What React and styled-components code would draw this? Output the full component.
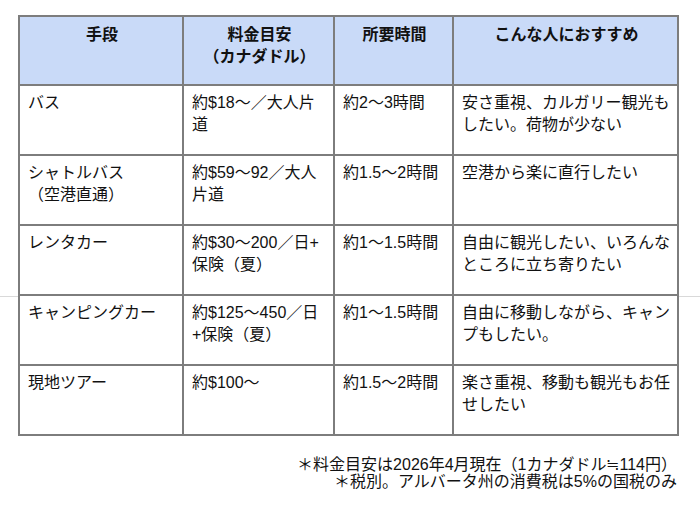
import styled, { createGlobalStyle } from "styled-components";

const GlobalStyle = createGlobalStyle`
  html, body {
    margin: 0;
    padding: 0;
    background: #ffffff;
  }
  body {
    font-family: "Liberation Sans", "Noto Sans CJK JP", sans-serif;
    color: #111111;
  }
`;

const Page = styled.div`
  position: relative;
  width: 700px;
  height: 507px;
  padding: 15px 0 0 18px;
  box-sizing: border-box;
  overflow: hidden;
`;

// faint page-break rule that runs across the whole sheet
const PageRule = styled.div`
  position: absolute;
  left: 0;
  right: 0;
  top: 296px;
  height: 1px;
  background: #d9d9d9;
`;

const Table = styled.table`
  position: relative;
  table-layout: fixed;
  border-collapse: separate;
  border-spacing: 0;
  width: 661px;
  border-top: 2px solid #7d7d7d;
  border-left: 2px solid #7d7d7d;
  font-size: 16px;
  line-height: 22px;
`;

const HeadCell = styled.th`
  box-sizing: border-box;
  height: 69px;
  padding: 7px 6px 7px 8px;
  background: #c9daf8;
  border-right: 2px solid #7d7d7d;
  border-bottom: 2px solid #7d7d7d;
  font-weight: bold;
  text-align: center;
  vertical-align: top;
`;

const Cell = styled.td`
  box-sizing: border-box;
  height: 70px;
  padding: 6px 6px 6px 8px;
  background: #ffffff;
  border-right: 2px solid #7d7d7d;
  border-bottom: 2px solid #7d7d7d;
  text-align: left;
  vertical-align: top;
`;

const Notes = styled.div`
  width: 659px;
  margin-top: 20px;
  text-align: right;
  font-size: 16px;
  line-height: 17px;
`;

const columns = [164, 151, 119, 225];

const rows = [
  ["バス", "約$18〜／大人片道", "約2〜3時間", "安さ重視、カルガリー観光もしたい。荷物が少ない"],
  [
    <>
      シャトルバス
      <br />
      （空港直通）
    </>,
    "約$59〜92／大人片道",
    "約1.5〜2時間",
    "空港から楽に直行したい",
  ],
  [
    "レンタカー",
    <>
      約$30〜200／日+
      <br />
      保険（夏）
    </>,
    "約1〜1.5時間",
    "自由に観光したい、いろんなところに立ち寄りたい",
  ],
  ["キャンピングカー", "約$125〜450／日+保険（夏）", "約1〜1.5時間", "自由に移動しながら、キャンプもしたい。"],
  ["現地ツアー", "約$100〜", "約1.5〜2時間", "楽さ重視、移動も観光もお任せしたい"],
];

export default function App() {
  return (
    <>
      <GlobalStyle />
      <Page>
        <PageRule />
        <Table>
          <colgroup>
            {columns.map((w, i) => (
              <col key={i} style={{ width: w }} />
            ))}
          </colgroup>
          <thead>
            <tr>
              <HeadCell>手段</HeadCell>
              <HeadCell>
                料金目安
                <br />
                （カナダドル）
              </HeadCell>
              <HeadCell>所要時間</HeadCell>
              <HeadCell>こんな人におすすめ</HeadCell>
            </tr>
          </thead>
          <tbody>
            {rows.map((row, i) => (
              <tr key={i}>
                {row.map((text, j) => (
                  <Cell key={j}>{text}</Cell>
                ))}
              </tr>
            ))}
          </tbody>
        </Table>
        <Notes>
          ＊料金目安は2026年4月現在（1カナダドル≒114円）
          <br />
          ＊税別。アルバータ州の消費税は5%の国税のみ
        </Notes>
      </Page>
    </>
  );
}
